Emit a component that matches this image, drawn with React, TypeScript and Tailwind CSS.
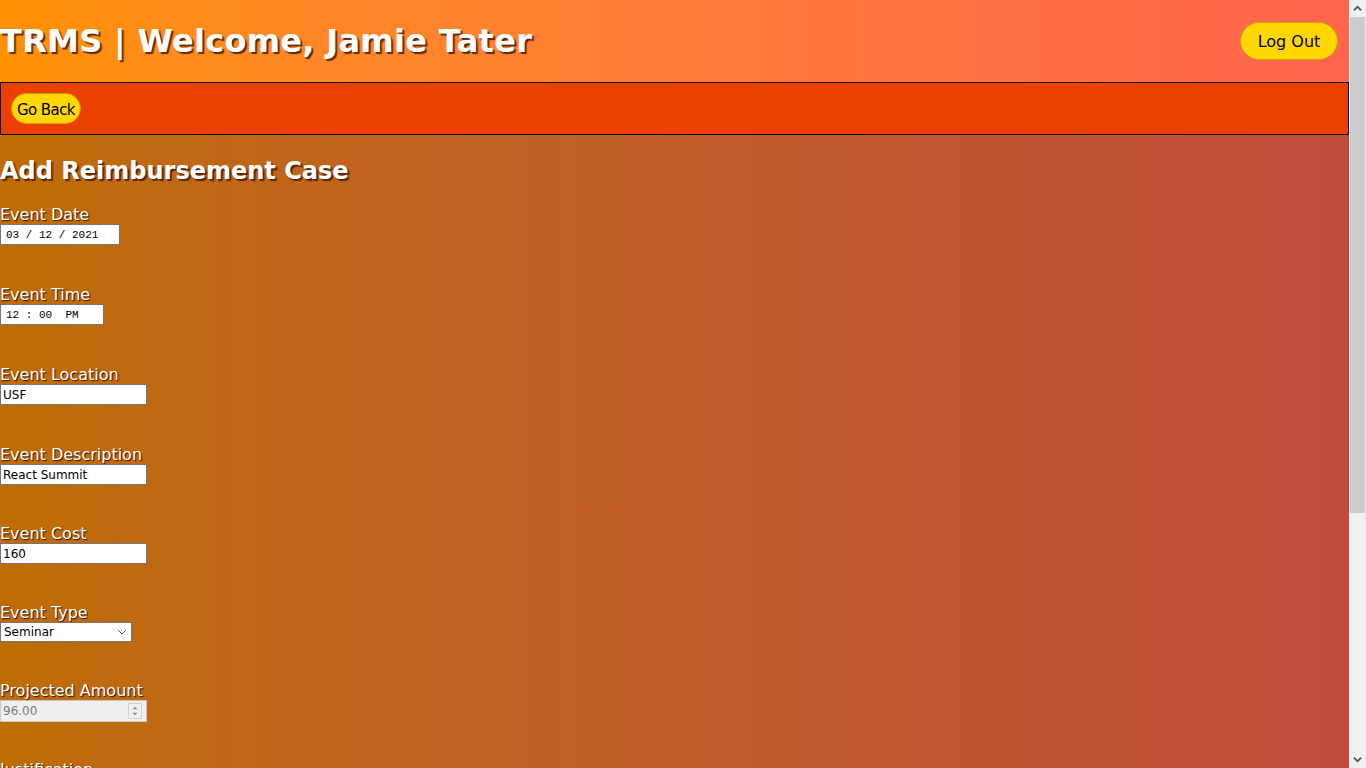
import React from "react"

const fields: { label: string; kind: string; value: string; width: string; gap: string }[] = [
  { label: "Event Date", kind: "mono", value: "03 / 12 / 2021", width: "w-[120px]", gap: "mt-0" },
  { label: "Event Time", kind: "mono", value: "12 : 00  PM", width: "w-[104px]", gap: "mt-[40px]" },
  { label: "Event Location", kind: "text", value: "USF", width: "w-[147px]", gap: "mt-[40px]" },
  { label: "Event Description", kind: "text", value: "React Summit", width: "w-[147px]", gap: "mt-[40px]" },
  { label: "Event Cost", kind: "text", value: "160", width: "w-[147px]", gap: "mt-[39px]" },
]

const Label = ({ children }: { children: React.ReactNode }) => (
  <label className="block h-[19px] text-[16px] leading-[19px] text-white [text-shadow:1px_1px_1px_rgba(50,15,0,1)]">
    {children}
  </label>
)

const Scrollbar = () => (
  <div className="w-[17px] h-full flex flex-col bg-[#f0f0f0]">
    <div className="h-[17px] flex items-center justify-center text-[#505050]">
      <svg viewBox="0 0 10 10" className="w-[9px] h-[9px]">
        <path d="M1 7 L5 3 L9 7" fill="none" stroke="currentColor" strokeWidth="2" />
      </svg>
    </div>
    <div className="mx-[1px] h-[496px] bg-[#cdcdcd]" />
    <div className="flex-1" />
    <div className="h-[17px] flex items-center justify-center text-[#505050]">
      <svg viewBox="0 0 10 10" className="w-[9px] h-[9px]">
        <path d="M1 3 L5 7 L9 3" fill="none" stroke="currentColor" strokeWidth="2" />
      </svg>
    </div>
  </div>
)

const App = () => {
  return (
    <div className="h-screen flex font-['DejaVu_Sans',Verdana,sans-serif]">
      <div className="flex-1 overflow-hidden flex flex-col">
        <header className="h-[82px] shrink-0 flex items-center justify-between pr-[11px] bg-gradient-to-r from-[#ff9100] to-[#ff644c]">
          <h1 className="text-[32px] font-bold text-white [text-shadow:2px_2px_1px_rgba(40,10,0,0.75)] tracking-[0.3px]">
            TRMS | Welcome, Jamie Tater
          </h1>
          <button className="w-[98px] h-[38px] pt-[2px] rounded-full bg-[#ffd700] border border-[#c9a400] text-[16px] text-black">
            Log Out
          </button>
        </header>

        <nav className="h-[53px] shrink-0 bg-[#eb4000] border border-black flex items-center pl-[10px]">
          <button className="w-[70px] h-[31px] pt-[3px] rounded-full bg-[#ffd700] border border-[#c9a400] text-[15px] text-black tracking-[-0.6px]">
            Go Back
          </button>
        </nav>

        <main className="flex-1 shrink-0 min-h-[1000px] bg-gradient-to-r from-[#bf6c03] to-[#c14b3b] pb-[40px]">
          <h2 className="mt-[21px] h-[30px] text-[24px] leading-[30px] font-bold text-white [text-shadow:2px_2px_1px_rgba(40,10,0,0.7)]">
            Add Reimbursement Case
          </h2>

          <div className="mt-[19px] flex flex-col">
            {fields.map((f) => (
              <div key={f.label} className={f.gap}>
                <Label>{f.label}</Label>
                <input
                  readOnly
                  value={f.value}
                  className={
                    f.kind === "mono"
                      ? `${f.width} h-[21px] block bg-white border border-[#767676] px-[5px] text-[11px] text-black font-['Liberation_Mono',monospace] whitespace-pre`
                      : `${f.width} h-[21px] block bg-white border border-[#767676] px-[2px] text-[12px] text-black`
                  }
                />
              </div>
            ))}

            <div className="mt-[39px]">
              <Label>Event Type</Label>
              <div className="w-[132px] h-[20px] flex items-center bg-white border border-[#767676] pr-[4px]">
                <select
                  defaultValue="Seminar"
                  className="flex-1 h-full appearance-none bg-white text-[12px] text-black pl-[3px] outline-none"
                >
                  <option>Seminar</option>
                  <option>University Course</option>
                  <option>Certification</option>
                  <option>Technical Training</option>
                  <option>Other</option>
                </select>
                <svg viewBox="0 0 10 6" className="w-[10px] h-[6px] text-[#555]">
                  <path d="M1 1 L5 5 L9 1" fill="none" stroke="currentColor" strokeWidth="1" />
                </svg>
              </div>
            </div>

            <div className="mt-[39px]">
              <Label>Projected Amount</Label>
              <div className="w-[147px] h-[22px] flex items-center bg-[#efefef] border border-[#c8c8c8] pl-[2px] pr-[4px]">
                <span className="flex-1 text-[12px] text-[#7a7a7a]">96.00</span>
                <span className="flex flex-col w-[14px] h-[16px] border border-[#d0d0d0] text-[#8a8a8a]">
                  <svg viewBox="0 0 14 8" className="w-full h-1/2">
                    <path d="M4 6 L7 3 L10 6 Z" fill="currentColor" />
                  </svg>
                  <svg viewBox="0 0 14 8" className="w-full h-1/2">
                    <path d="M4 2 L7 5 L10 2 Z" fill="currentColor" />
                  </svg>
                </span>
              </div>
            </div>

            <div className="mt-[38px]">
              <Label>Justification</Label>
              <textarea
                readOnly
                className="block w-[180px] h-[40px] bg-white border border-[#767676] text-[12px]"
              />
            </div>

            <div className="mt-[38px]">
              <Label>Attachments</Label>
              <input
                readOnly
                className="w-[147px] h-[21px] block bg-white border border-[#767676] px-[2px] text-[12px]"
              />
            </div>

            <div className="mt-[38px]">
              <button className="w-[80px] h-[31px] rounded-full bg-[#ffd700] border border-[#c9a400] text-[15px] text-black">
                Submit
              </button>
            </div>
          </div>
        </main>
      </div>
      <Scrollbar />
    </div>
  )
}

export default App
